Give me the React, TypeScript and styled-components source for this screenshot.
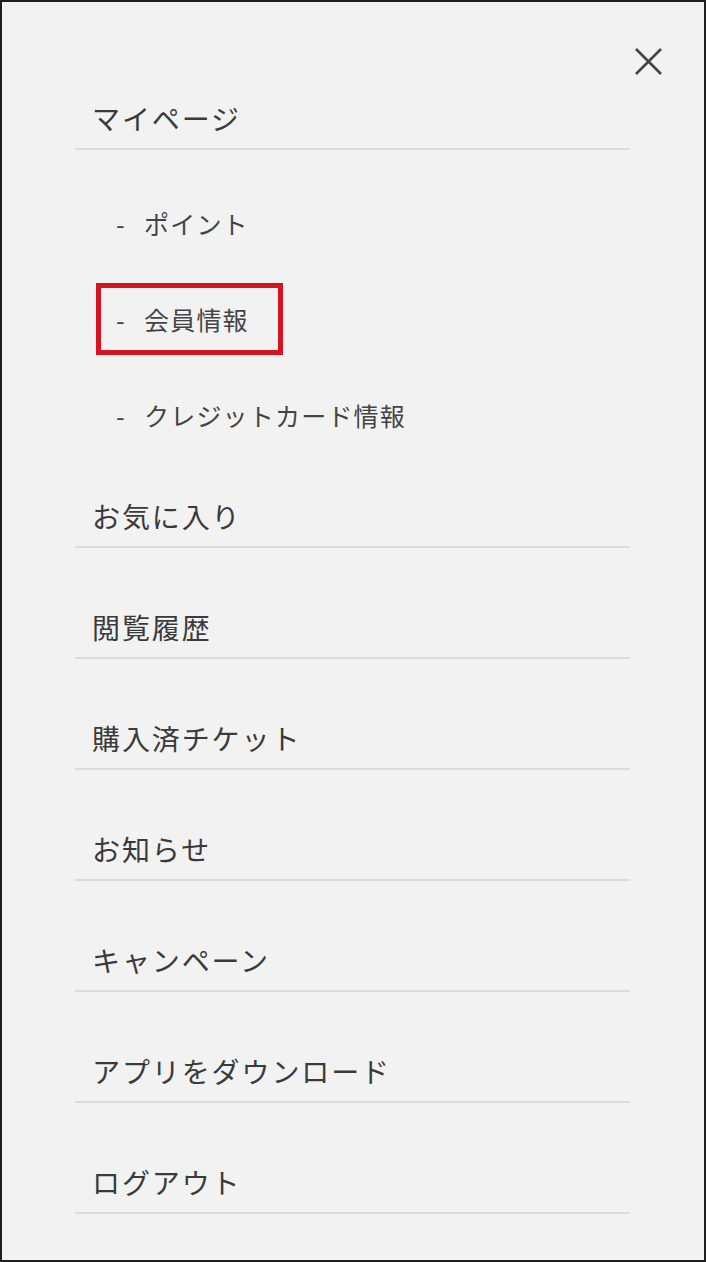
import React from "react";
import styled, { createGlobalStyle } from "styled-components";

const GlobalStyle = createGlobalStyle`
  html, body {
    margin: 0;
    padding: 0;
    background: #f2f2f2;
  }
  * { box-sizing: border-box; }
`;

const Frame = styled.div`
  width: 706px;
  height: 1262px;
  border: 2px solid #1e1e1e;
  background: #f2f2f2;
  font-family: "Noto Sans CJK JP", "Noto Sans", sans-serif;
  color: #3a3a3a;
  display: flex;
  flex-direction: column;
`;

const Header = styled.div`
  display: flex;
  justify-content: flex-end;
  padding: 45px 41px 0 0;
`;

const CloseButton = styled.button`
  width: 29px;
  height: 29px;
  padding: 0;
  border: none;
  background: transparent;
  cursor: pointer;
  display: flex;
`;

const Menu = styled.nav`
  display: flex;
  flex-direction: column;
  padding: 0 74px 0 73px;
`;

const MainItem = styled.a`
  display: block;
  padding: 59px 0 10px 17px;
  border-bottom: 2px solid #dcdcdc;
  font-size: 28px;
  line-height: 40px;
  letter-spacing: 1.9px;
  color: inherit;
  text-decoration: none;
  &:first-child {
    padding-top: 22px;
  }
`;

const SubList = styled.div`
  display: flex;
  flex-direction: column;
  gap: 56px;
  padding: 53px 0 2px 37px;
`;

const SubItem = styled.a<{ $highlight?: boolean }>`
  display: flex;
  width: fit-content;
  padding: 0 18px 0 4px;
  font-size: 25px;
  line-height: 40px;
  letter-spacing: 1.2px;
  color: #444;
  text-decoration: none;
  outline: ${(p) => (p.$highlight ? "5px solid #d7131f" : "none")};
  outline-offset: 11px;
`;

const Dash = styled.span`
  width: 28px;
  flex: none;
`;

const subs = [
  { label: "ポイント" },
  { label: "会員情報", highlight: true },
  { label: "クレジットカード情報" },
];

const mains = [
  "お気に入り",
  "閲覧履歴",
  "購入済チケット",
  "お知らせ",
  "キャンペーン",
  "アプリをダウンロード",
  "ログアウト",
];

export default function App() {
  return (
    <>
      <GlobalStyle />
      <Frame>
        <Header>
          <CloseButton aria-label="close">
            <svg width="29" height="29" viewBox="0 0 29 29">
              <path
                d="M2 2 L27 27 M27 2 L2 27"
                stroke="#444"
                strokeWidth="2.6"
                strokeLinecap="butt"
                fill="none"
              />
            </svg>
          </CloseButton>
        </Header>
        <Menu>
          <MainItem href="#">マイページ</MainItem>
          <SubList>
            {subs.map((s) => (
              <SubItem key={s.label} href="#" $highlight={s.highlight}>
                <Dash>-</Dash>
                {s.label}
              </SubItem>
            ))}
          </SubList>
          {mains.map((m) => (
            <MainItem key={m} href="#">
              {m}
            </MainItem>
          ))}
        </Menu>
      </Frame>
    </>
  );
}
